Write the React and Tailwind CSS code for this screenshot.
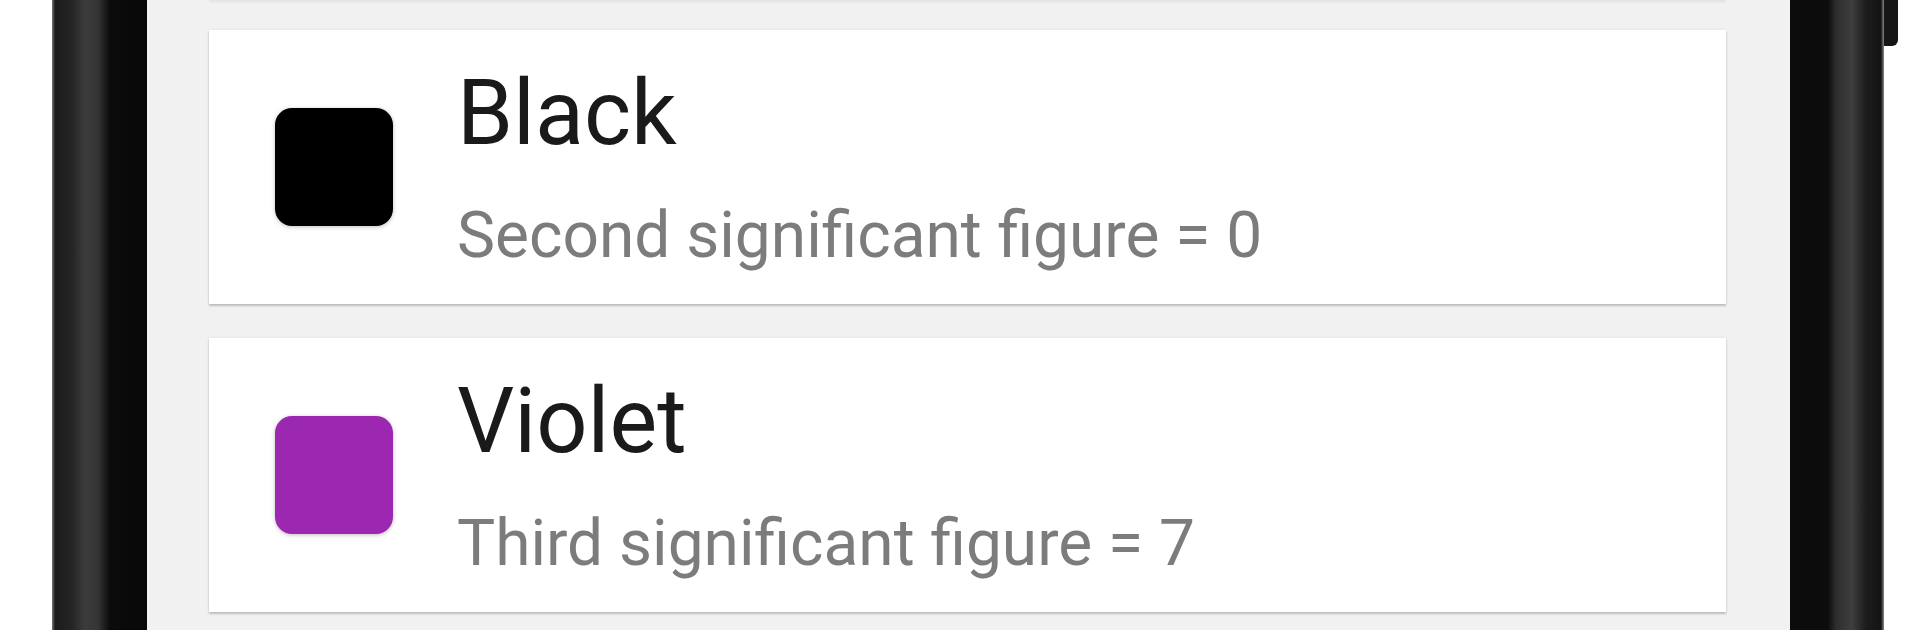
import React from "react";

const items = [
  { name: "Black", color: "bg-[#000000]", desc: "Second significant figure = 0" },
  { name: "Violet", color: "bg-[#9c27b0]", desc: "Third significant figure = 7" },
];

function Card({ item }) {
  return (
    <div className="flex h-[274px] w-full items-center bg-white pl-[66px] shadow-[0_2px_2px_rgba(0,0,0,0.2),0_0_3px_rgba(0,0,0,0.08)]">
      <div className={`h-[118px] w-[118px] shrink-0 rounded-[17px] ${item.color} shadow-[0_1px_4px_rgba(0,0,0,0.25)]`} />
      <div className="ml-[64px] flex flex-col">
        <div className="h-[106px] text-[90px] leading-[106px] text-[#1a1a1a]">{item.name}</div>
        <div className="mt-[31px] h-[75px] text-[64px] leading-[75px] text-[#7c7c7c]">{item.desc}</div>
      </div>
    </div>
  );
}

export default function App() {
  return (
    <div
      className="flex h-[630px] w-[1920px] overflow-hidden bg-white"
      style={{ fontFamily: "Roboto, 'Noto Sans', 'Liberation Sans', sans-serif" }}
    >
      <div className="w-[52px] shrink-0" />
      <div className="w-[95px] shrink-0 bg-[linear-gradient(to_right,#7a7a7a_0px,#1c1c1c_3px,#252525_20px,#3c3c3c_33px,#353535_46px,#0b0b0b_58px,#080808_95px)]" />
      <div className="flex w-[1643px] shrink-0 flex-col bg-[#f1f1f1] pl-[62px] pr-[64px]">
        <div className="h-[4px] w-full bg-[linear-gradient(to_bottom,#e2e2e2,#f1f1f1)]" />
        <div className="mt-[26px] flex flex-col gap-[34px]">
          {items.map((it) => (
            <Card key={it.name} item={it} />
          ))}
        </div>
      </div>
      <div className="w-[94px] shrink-0 bg-[linear-gradient(to_right,#0c0c0c_0px,#0c0c0c_38px,#2e2e2e_46px,#3e3e3e_62px,#1c1c1c_76px,#141414_91px,#8a8a8a_94px)]" />
      <div className="flex w-[36px] shrink-0 flex-col">
        <div className="h-[46px] w-[14px] rounded-br-[6px] bg-[#161616]" />
      </div>
    </div>
  );
}
